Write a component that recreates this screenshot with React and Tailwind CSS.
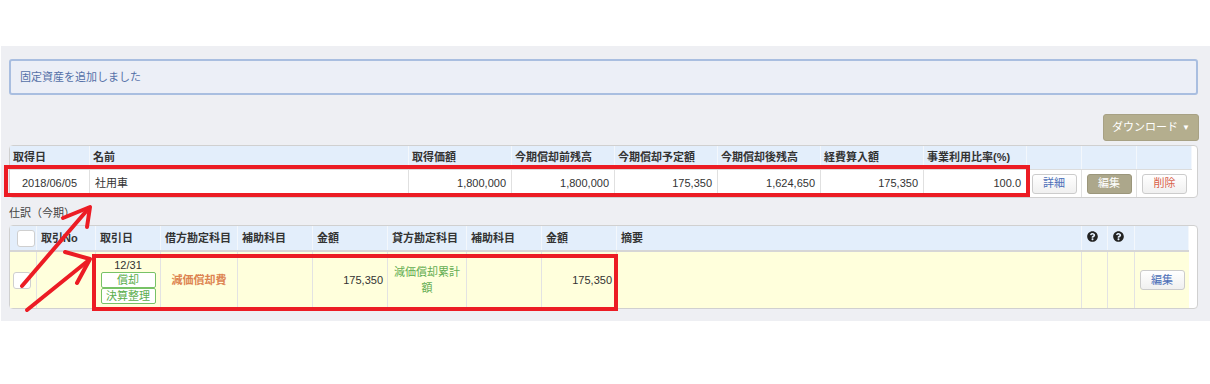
import React from "react";
import { FaQuestionCircle } from "react-icons/fa";

function Btn({ children, variant = "default" }) {
  if (variant === "dark") {
    return (
      <div className="flex h-[20px] w-[45px] items-center justify-center rounded-[3px] border border-[#9b967b] bg-[#aca78b] text-[11px] text-white">
        {children}
      </div>
    );
  }
  const color = variant === "danger" ? "text-[#d9604a]" : "text-[#4c6fb8]";
  return (
    <div
      className={`flex h-[20px] w-[45px] items-center justify-center rounded-[3px] border border-[#cccccc] bg-gradient-to-b from-white to-[#f0f0f0] text-[11px] ${color}`}
    >
      {children}
    </div>
  );
}

function Badge({ children }) {
  return (
    <div className="flex h-[16px] w-[55px] items-center justify-center rounded-[2px] border border-[#77c266] bg-white text-[11px] leading-none text-[#5cae4c]">
      {children}
    </div>
  );
}

function Check() {
  return <div className="ml-[3px] h-[17px] w-[18px] rounded-[3px] border border-[#cfcfcf] bg-white" />;
}

const t1cols =
  "grid w-[1182px] grid-cols-[80px_319px_103px_103px_103px_103px_103px_103px_55px_55px_55px]";
const t2cols =
  "grid w-[1179px] grid-cols-[27px_59px_65px_77px_75px_75px_79px_75px_75px_465px_26px_27px_54px]";

export default function App() {
  const h1 = ["取得日", "名前", "取得価額", "今期償却前残高", "今期償却予定額", "今期償却後残高", "経費算入額", "事業利用比率(%)", "", "", ""];
  const h2 = ["", "取引No", "取引日", "借方勘定科目", "補助科目", "金額", "貸方勘定科目", "補助科目", "金額", "摘要", "?", "?", ""];
  return (
    <div className="relative h-[384px] w-[1210px] overflow-hidden bg-white font-['Liberation_Sans','Noto_Sans_CJK_JP',sans-serif] text-[11px] text-[#333]">
      <div className="ml-px mt-[46px] h-[275px] bg-[#eeeff3] pl-[8px] pr-[12px] pt-[13px]">
        {/* alert */}
        <div className="flex h-[36px] items-center rounded-[3px] border-2 border-[#a9bee0] bg-[#eceff7] pl-[9px] text-[11px] text-[#5571a8]">
          固定資産を追加しました
        </div>

        {/* download */}
        <div className="mt-[19px] flex justify-end">
          <div className="mr-[-1px] flex h-[27px] w-[96px] items-center justify-center gap-[4px] rounded-[3px] border border-[#a7a184] bg-[#b4ae8e] text-[11px] text-white">
            <span>ダウンロード</span>
            <span className="text-[8px]">▼</span>
          </div>
        </div>

        {/* table 1 */}
        <div className="mt-[4px] h-[53px] rounded-[4px] border border-[#d0d0d0] bg-white">
          <div className={`${t1cols} h-[23px] bg-[#e3eefb]`}>
            {h1.map((h, i) => (
              <div key={i} className="flex items-center border-r border-[#f3f7fc] pl-[3px] font-bold text-[#333]">
                {h}
              </div>
            ))}
          </div>
          <div className={`${t1cols} h-[28px] border-t border-[#dcdcdc]`}>
            <div className="flex items-center justify-center border-r border-[#e0e0e0]">2018/06/05</div>
            <div className="flex items-center border-r border-[#e0e0e0] pl-[5px]">社用車</div>
            {["1,800,000", "1,800,000", "175,350", "1,624,650", "175,350", "100.0"].map((v, i) => (
              <div key={i} className="flex items-center justify-end border-r border-[#e0e0e0] pr-[5px]">
                {v}
              </div>
            ))}
            <div className="flex items-center justify-center border-r border-[#e0e0e0]">
              <Btn>詳細</Btn>
            </div>
            <div className="flex items-center justify-center border-r border-[#e0e0e0]">
              <Btn variant="dark">編集</Btn>
            </div>
            <div className="flex items-center justify-center">
              <Btn variant="danger">削除</Btn>
            </div>
          </div>
        </div>

        {/* label */}
        <div className="mt-[7px] h-[16px] pl-[-1px] leading-[16px] text-[#444]">仕訳（今期）</div>

        {/* table 2 */}
        <div className="mt-[4px] h-[84px] rounded-[4px] border border-[#d0d0d0] bg-white">
          <div className={`${t2cols} h-[26px] border-b-2 border-[#d6d6d6] bg-[#e3eefb]`}>
            {h2.map((h, i) => (
              <div key={i} className="flex items-center border-r border-[#f3f7fc] pl-[4px] font-bold text-[#333]">
                {i === 0 ? <Check /> : h === "?" ? <FaQuestionCircle className="ml-[1px] mt-[-3px] text-[11px] text-[#222]" /> : h}
              </div>
            ))}
          </div>
          <div className={`${t2cols} h-[56px] bg-[#ffffdc]`}>
            <div className="flex items-center border-r border-[#e3e3e3]">
              <Check />
            </div>
            <div className="border-r border-[#e3e3e3]" />
            <div className="flex flex-col items-center justify-center border-r border-[#e3e3e3] pt-[2px]">
              <div className="leading-[14px] text-[#333]">12/31</div>
              <Badge>償却</Badge>
              <Badge>決算整理</Badge>
            </div>
            <div className="flex items-center justify-center border-r border-[#e3e3e3] font-bold text-[#dd8450]">減価償却費</div>
            <div className="border-r border-[#e3e3e3]" />
            <div className="flex items-center justify-end border-r border-[#e3e3e3] pr-[4px]">175,350</div>
            <div className="flex items-center justify-center border-r border-[#e3e3e3] px-[4px] text-center leading-[16px] text-[#63ad52]">
              減価償却累計額
            </div>
            <div className="border-r border-[#e3e3e3]" />
            <div className="flex items-center justify-end border-r border-[#e3e3e3] pr-[4px]">175,350</div>
            <div className="border-r border-[#e3e3e3]" />
            <div className="border-r border-[#e3e3e3]" />
            <div className="border-r border-[#e3e3e3]" />
            <div className="flex items-center justify-center">
              <Btn>編集</Btn>
            </div>
          </div>
        </div>
      </div>

      {/* red annotations */}
      <svg className="pointer-events-none absolute left-0 top-0" width="1210" height="384" viewBox="0 0 1210 384">
        <g fill="none" stroke="#ec1c24" strokeWidth="4">
          <rect x="6" y="167" width="1022" height="28" />
          <rect x="94" y="256" width="522" height="53" />
        </g>
        <g fill="none" stroke="#ec1c24" strokeWidth="4" strokeLinecap="round" strokeLinejoin="round">
          <path d="M22 286 L89 208" />
          <path d="M63 218 L90 207 L87 227" />
          <path d="M27 310 L89 260" />
          <path d="M65 252 L90 259 L77 283" />
        </g>
      </svg>
    </div>
  );
}
